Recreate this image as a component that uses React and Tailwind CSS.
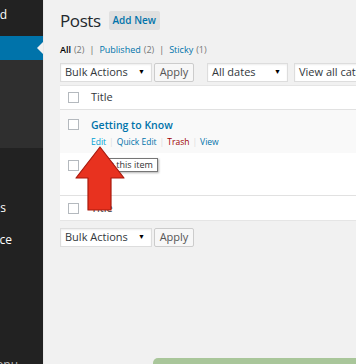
import React from "react"

const font = { fontFamily: '"Open Sans", "Liberation Sans", sans-serif' }

function Checkbox() {
  return <div className="w-[11px] h-[11px] bg-white border border-[#b4b9be] shrink-0" />
}

function Select({ label, width }) {
  return (
    <div className={`${width} h-[19px] bg-white border border-[#dddddd] shadow-[inset_0_1px_2px_rgba(0,0,0,0.07)] flex items-center justify-between pl-[4px] pr-[6px] shrink-0`}>
      <span className="text-[11px] text-[#32373c] whitespace-nowrap">{label}</span>
      <span className="text-[7px] text-black">▼</span>
    </div>
  )
}

function ApplyButton() {
  return (
    <div className="w-[40px] h-[19px] bg-[#f7f7f7] border border-[#cccccc] rounded-[2px] flex items-center justify-center text-[11px] text-[#555555] shrink-0">
      Apply
    </div>
  )
}

function SideItem({ label, pad }) {
  return (
    <div className={`h-[32px] flex items-center justify-end ${pad} text-[12px] text-white whitespace-nowrap`}>
      {label}
    </div>
  )
}

export default function App() {
  return (
    <div style={font} className="relative w-[356px] h-[364px] flex overflow-hidden bg-[#f1f1f1]">
      {/* admin menu */}
      <div className="w-[44px] shrink-0 bg-[#222222] border-r border-[#e9e9e9] flex flex-col overflow-hidden">
        <div className="h-[36px] flex items-start justify-end pt-[6px] pr-[36px] text-[12px] leading-[18px] text-white whitespace-nowrap">
          Dashboard
        </div>
        <div className="relative h-[24px] bg-[#0073aa]">
          <div className="absolute right-0 top-[6px] w-0 h-0 border-y-[6px] border-y-transparent border-r-[6px] border-r-[#f1f1f1]" />
        </div>
        <div className="h-[88px] bg-[#2f2f2f]" />
        <div className="h-[44px]" />
        <SideItem label="Pages" pad="pr-[37px]" />
        <SideItem label="Appearance" pad="pr-[31px]" />
        <div className="mt-auto h-[7px] flex items-start justify-end pr-[25px] text-[12px] leading-[16px] text-[#bbbbbb] whitespace-nowrap">
          Collapse menu
        </div>
      </div>

      {/* content */}
      <div className="flex-1 min-w-0 flex flex-col pl-[16px]">
        <div className="flex items-center h-[20px] mt-[10px]">
          <span className="text-[17px] tracking-[-0.4px] text-[#23282d] leading-none">Posts</span>
          <span className="ml-[8px] h-[19px] w-[51px] bg-[#e0e0e0] rounded-[2px] flex items-center justify-center text-[10px] font-semibold text-[#0073aa] whitespace-nowrap">
            Add New
          </span>
        </div>

        <div className="mt-[13px] h-[14px] flex items-center text-[9px] whitespace-nowrap">
          <span className="font-semibold text-[#000000]">All</span>
          <span className="ml-[3px] text-[#777777]">(2)</span>
          <span className="mx-[5px] text-[#666666]">|</span>
          <span className="text-[#0073aa]">Published</span>
          <span className="ml-[3px] text-[#777777]">(2)</span>
          <span className="mx-[5px] text-[#666666]">|</span>
          <span className="text-[#0073aa]">Sticky</span>
          <span className="ml-[3px] text-[#777777]">(1)</span>
        </div>

        <div className="mt-[6px] flex items-center">
          <Select label="Bulk Actions" width="w-[92px]" />
          <div className="ml-[2px]"><ApplyButton /></div>
          <div className="ml-[13px]"><Select label="All dates" width="w-[81px]" /></div>
          <div className="ml-[6px]"><Select label="View all categories" width="w-[110px]" /></div>
        </div>

        {/* table */}
        <div className="mt-[3px] bg-white border-y border-[#e5e5e5]">
          <div className="h-[24px] flex items-center pl-[8px] border-b border-[#e1e1e1]">
            <Checkbox />
            <span className="ml-[12px] text-[11px] text-[#32373c]">Title</span>
          </div>
          <div className="h-[43px] bg-[#f9f9f9] flex items-start pl-[8px] pt-[7px]">
            <div className="mt-[2px]"><Checkbox /></div>
            <div className="ml-[12px] flex flex-col">
              <span className="text-[10.5px] leading-[17px] font-semibold text-[#0073aa]">Getting to Know</span>
              <div className="mt-[1px] flex items-center text-[8.5px] leading-[14px] whitespace-nowrap">
                <span className="text-[#00a0d2]">Edit</span>
                <span className="mx-[3px] text-[#dddddd]">|</span>
                <span className="text-[#0073aa]">Quick Edit</span>
                <span className="mx-[3px] text-[#dddddd]">|</span>
                <span className="text-[#a00000]">Trash</span>
                <span className="mx-[3px] text-[#dddddd]">|</span>
                <span className="text-[#0073aa]">View</span>
              </div>
            </div>
          </div>
          <div className="h-[42px] flex items-start pl-[8px] pt-[7px]">
            <Checkbox />
          </div>
          <div className="h-[25px] flex items-center pl-[8px] border-t border-[#e1e1e1]">
            <Checkbox />
            <span className="ml-[12px] text-[11px] text-[#32373c]">Title</span>
          </div>
        </div>

        <div className="mt-[7px] flex items-center">
          <Select label="Bulk Actions" width="w-[92px]" />
          <div className="ml-[2px]"><ApplyButton /></div>
        </div>

        <div className="mt-auto ml-auto w-[203px] h-[6px] bg-[#a9c69a] rounded-tl-[5px]" />
      </div>

      {/* browser tooltip over the second row */}
      <div className="absolute left-[93px] top-[158px] h-[14px] px-[4px] bg-white border border-[#767676] shadow-[1px_1px_2px_rgba(0,0,0,0.3)] flex items-center text-[9px] text-[#333333] whitespace-nowrap">
        Edit this item
      </div>

      {/* red arrow annotation */}
      <svg className="absolute left-0 top-0" width="356" height="364" viewBox="0 0 356 364">
        <polygon
          points="100,147 76,178 88,178 88,210 111,210 111,178 124,178"
          fill="#e8321f"
          stroke="#a8190d"
          strokeWidth="1.2"
          strokeLinejoin="round"
        />
      </svg>
    </div>
  )
}
